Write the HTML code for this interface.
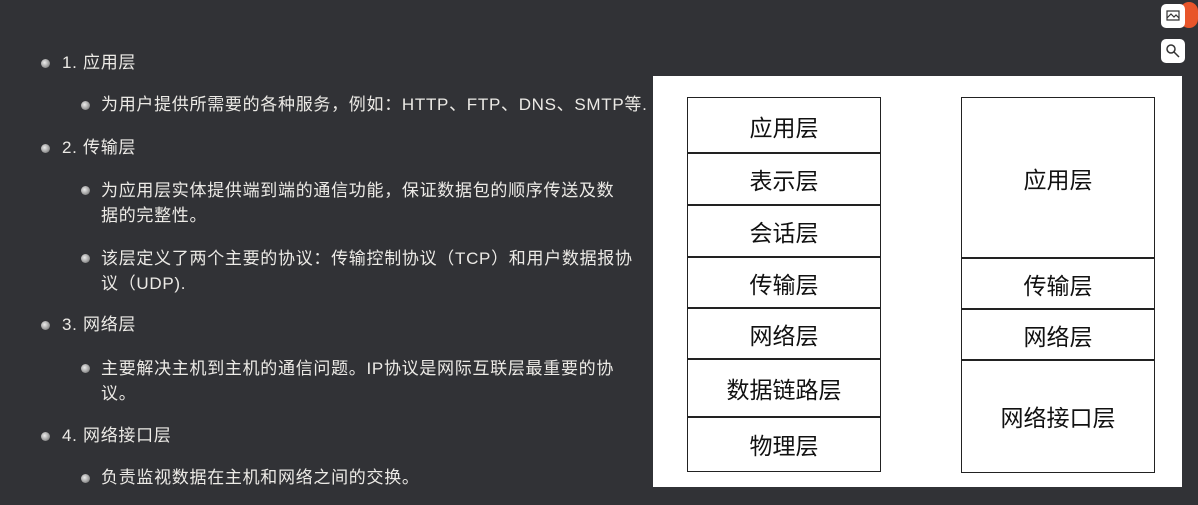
<!DOCTYPE html>
<html><head><meta charset="utf-8"><style>
body{margin:0;width:1198px;height:505px;background:#313236;overflow:hidden;position:relative;font-family:"Liberation Sans","Noto Sans CJK SC",sans-serif;color:#eceae6}
.t{position:absolute;font-size:17px;letter-spacing:0.7px;line-height:24px;white-space:nowrap}
.b{position:absolute;width:9px;height:9px;border-radius:50%;background:radial-gradient(circle at 40% 40%,#eee,#999 60%,#555)}
.box{position:absolute;background:#fff;left:653px;top:76px;width:529px;height:411px}
.c{position:absolute;border:1.5px solid #222;box-sizing:border-box;display:flex;align-items:center;justify-content:center;font-size:23px;color:#111;font-family:"Noto Sans CJK SC",sans-serif}
</style></head><body>
<div class="b" style="left:41px;top:59px"></div><div class="t" style="left:62px;top:51px">1. 应用层</div>
<div class="b" style="left:81px;top:101px"></div><div class="t" style="left:101px;top:93px">为用户提供所需要的各种服务，例如：HTTP、FTP、DNS、SMTP等.</div>
<div class="b" style="left:41px;top:144px"></div><div class="t" style="left:62px;top:136px">2. 传输层</div>
<div class="b" style="left:81px;top:186px"></div><div class="t" style="left:101px;top:178px;line-height:25px">为应用层实体提供端到端的通信功能，保证数据包的顺序传送及数<br>据的完整性。</div>
<div class="b" style="left:81px;top:254px"></div><div class="t" style="left:101px;top:246px;line-height:25px">该层定义了两个主要的协议：传输控制协议（TCP）和用户数据报协<br>议（UDP).</div>
<div class="b" style="left:41px;top:321px"></div><div class="t" style="left:62px;top:313px">3. 网络层</div>
<div class="b" style="left:81px;top:364px"></div><div class="t" style="left:101px;top:356px;line-height:25px">主要解决主机到主机的通信问题。IP协议是网际互联层最重要的协<br>议。</div>
<div class="b" style="left:41px;top:432px"></div><div class="t" style="left:62px;top:424px">4. 网络接口层</div>
<div class="b" style="left:81px;top:474px"></div><div class="t" style="left:101px;top:466px">负责监视数据在主机和网络之间的交换。</div>
<div class="box"></div>
<div class="c" style="left:687px;top:97px;width:194px;height:57px">应用层</div>
<div class="c" style="left:687px;top:152px;width:194px;height:54px">表示层</div>
<div class="c" style="left:687px;top:204px;width:194px;height:54px">会话层</div>
<div class="c" style="left:687px;top:256px;width:194px;height:53px">传输层</div>
<div class="c" style="left:687px;top:307px;width:194px;height:53px">网络层</div>
<div class="c" style="left:687px;top:358px;width:194px;height:60px">数据链路层</div>
<div class="c" style="left:687px;top:416px;width:194px;height:56px">物理层</div>
<div class="c" style="left:961px;top:97px;width:194px;height:162px">应用层</div>
<div class="c" style="left:961px;top:257px;width:194px;height:53px">传输层</div>
<div class="c" style="left:961px;top:308px;width:194px;height:53px">网络层</div>
<div class="c" style="left:961px;top:359px;width:194px;height:114px">网络接口层</div>
<div style="position:absolute;left:1180px;top:2px;width:18px;height:26px;border-radius:13px;background:#e8552a"></div>
<div style="position:absolute;left:1161px;top:4px;width:24px;height:24px;border-radius:5px;background:#fff"></div>
<svg style="position:absolute;left:1161px;top:4px" width="24" height="24"><path d="M6 7h12v9H6z M6 14l4-4 3 3 2-2 3 3" fill="none" stroke="#333" stroke-width="1.2"/></svg>
<div style="position:absolute;left:1161px;top:39px;width:24px;height:24px;border-radius:5px;background:#fff"></div>
<svg style="position:absolute;left:1161px;top:39px" width="24" height="24"><circle cx="10" cy="10" r="4" fill="none" stroke="#333" stroke-width="1.5"/><path d="M13 13l5 5" stroke="#333" stroke-width="1.5"/></svg>
</body></html>
